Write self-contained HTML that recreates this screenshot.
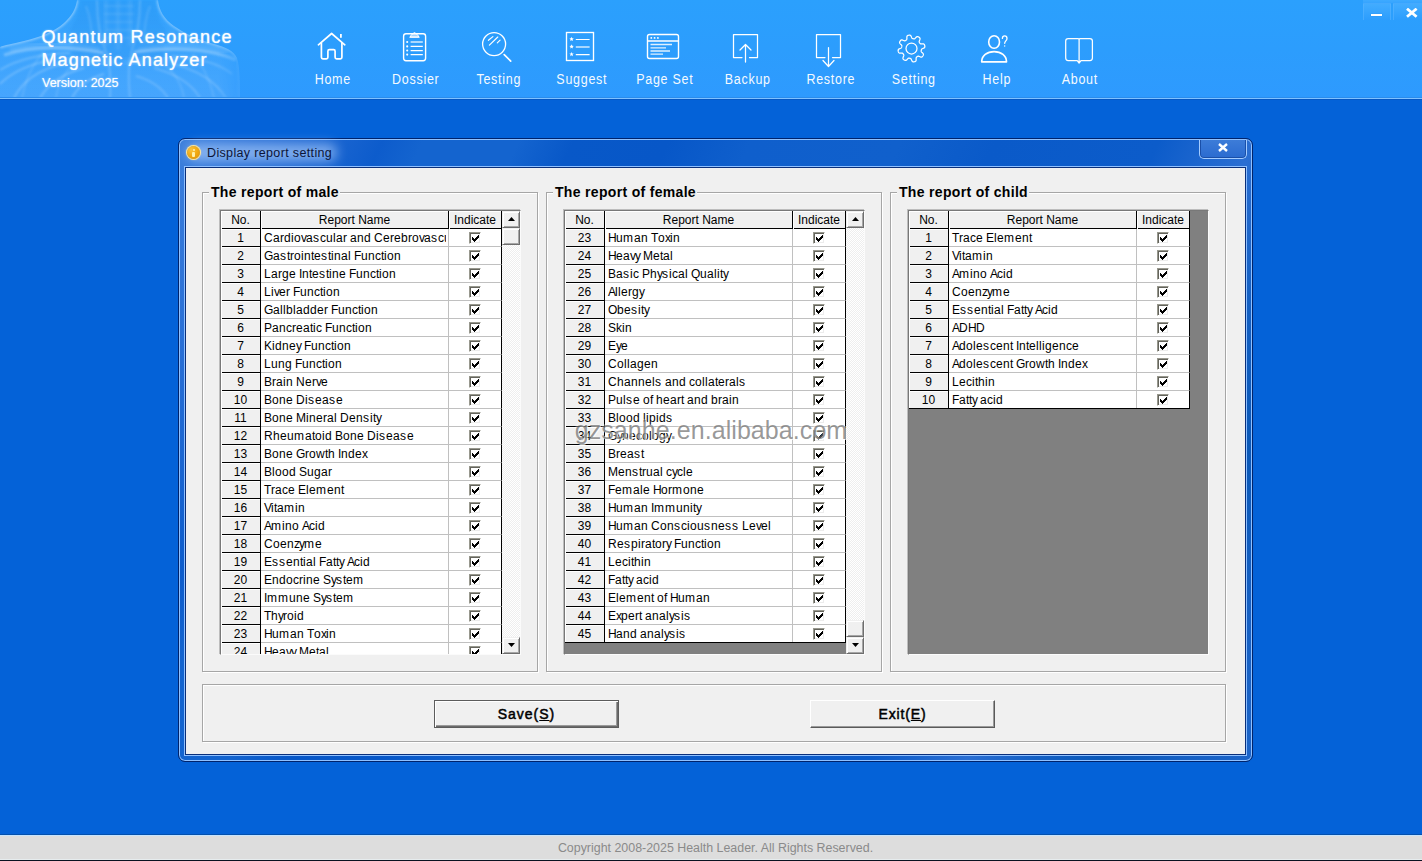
<!DOCTYPE html>
<html><head><meta charset="utf-8"><title>Quantum Resonance Magnetic Analyzer</title>
<style>
*{box-sizing:border-box;margin:0;padding:0}
html,body{width:1422px;height:861px;overflow:hidden}
body{position:relative;background:#0462d8;font-family:"Liberation Sans",sans-serif;font-size:12px;color:#000}
/* ---------- header ---------- */
.hdr{position:absolute;left:0;top:0;width:1422px;height:98px;background:linear-gradient(#2ba0fd,#2c9dfd 50%,#2e9afe);overflow:hidden}
.hdr .torso{position:absolute;left:0;top:0}
.hline1{position:absolute;left:0;top:97px;width:1422px;height:1px;background:#2a8cec}
.hline2{position:absolute;left:0;top:98px;width:1422px;height:1px;background:#7fc1ff}
.hline3{position:absolute;left:0;top:99px;width:1422px;height:1px;background:#0457c4}
.brand{position:absolute;left:42px;color:#fff;white-space:nowrap;text-shadow:0 0 2px rgba(255,255,255,.6);-webkit-text-stroke:.22px #fff}
.b1{top:26px;left:41.5px;font-size:18px;letter-spacing:1.24px;line-height:22px}
.b2{top:49px;left:41.5px;font-size:18px;letter-spacing:1.12px;line-height:22px}
.b3{top:76px;font-size:12.5px;line-height:14px;left:42px;letter-spacing:0;-webkit-text-stroke:.1px #fff}
.nav{position:absolute;top:0;height:98px;width:90px;color:#fff;text-align:center}
.nav svg{position:absolute;left:0;top:0;overflow:visible}
.nav span{position:absolute;left:.8px;width:90px;top:72px;font-size:12.5px;letter-spacing:.72px;line-height:14px;white-space:nowrap;color:#f4faff;transform:translateY(.75px) scaleY(1.1);transform-origin:50% 50%}
.wbtn{position:absolute;top:3px;height:17px;background:linear-gradient(#42acff,#2c9dfd);border:1px solid rgba(90,180,255,.55);border-bottom:none}
/* ---------- footer ---------- */
.footer{position:absolute;left:0;top:834px;width:1422px;height:27px;background:#dddddd;box-shadow:inset 0 -1px 0 #e6ecee;border-top:1px solid #0450ac;border-bottom:1px solid #0a1220;text-align:center}
.footer:before{content:"";position:absolute;left:0;top:0;width:100%;height:1px;background:#c6e4ff}
.footer span{position:absolute;left:0;width:1431px;top:6px;font-size:12.42px;line-height:14px;color:#8a8a8a;white-space:nowrap}
/* ---------- dialog ---------- */
.dlg{position:absolute;left:178px;top:138px;width:1075px;height:624px;border-radius:7px;border:1px solid #00236b;
 background:linear-gradient(115deg,#3c7fdc 0%,#2a70d6 7%,#0d5ccc 15%,#1464cf 18%,#1464cf 25%,#0858c8 29%,#0757c8 36%,#0f5fcc 42%,#1060cc 53%,#0a5ac9 60%,#0c5cca 72%,#2a6ed2 79%,#1460c4 84%,#0a58b8 89%,#1660c4 95%,#1c64c8 100%);
 box-shadow:inset 0 0 0 1px #8fc0ff}
.dlg-glow{position:absolute;left:8px;top:5px;width:150px;height:17px;border-radius:9px;background:rgba(185,215,255,.62);filter:blur(6px)}
.ticon{position:absolute;left:8.4px;top:7.4px;width:13px;height:13px;border-radius:50%;background:radial-gradient(circle at 35% 30%,#f9c440 0%,#f0a810 50%,#dd8e00 100%);box-shadow:0 0 0 1px #ffe596,0 0 1.5px 1px rgba(255,235,170,.5)}
.ticon:before{content:"";position:absolute;left:5.2px;top:2.2px;width:2.6px;height:2.6px;border-radius:50%;background:#fff3b4}
.ticon:after{content:"";position:absolute;left:5px;top:5.6px;width:3px;height:5.2px;background:#fff0aa;border-radius:1px}
.ttext{position:absolute;left:28px;top:6px;font-size:12.5px;line-height:16px;letter-spacing:.35px;color:#0b1538;white-space:nowrap}
.xbtn{position:absolute;left:1020px;top:1px;width:48px;height:19px;border:1px solid #a4ccff;border-top:none;border-radius:0 0 5px 5px;background:linear-gradient(#3d7cd8,#2a6bd0);box-shadow:inset 0 -1px 0 #1a4fa8,inset 1px 0 0 #1a4fa8,inset -1px 0 0 #1a4fa8}
.xbtn svg{position:absolute;left:18px;top:4px}
.client{position:absolute;left:7px;top:29px;width:1059px;height:586px;background:#f0f0f0;box-shadow:0 0 0 1px #0a2f7a,0 0 0 2px #8fc0ff}
/* group boxes */
.gb{position:absolute;top:24px;width:336px;height:480px;border:1px solid #a6a6a6;box-shadow:1px 1px 0 #fff,inset 1px 1px 0 #fff}
.gb .cap{position:absolute;left:6px;top:-9px;padding:0 1px 0 2px;background:#f0f0f0;font-weight:bold;font-size:14px;line-height:17px;letter-spacing:.32px;white-space:nowrap}
.gb2{position:absolute;left:16px;top:516px;width:1024px;height:58px;border:1px solid #a6a6a6;box-shadow:1px 1px 0 #fff,inset 1px 1px 0 #fff}
/* grids */
.grid{position:absolute;top:42px;width:301px;height:445px;background:#808080;border:1px solid #787878;border-right-color:#fbfbfb;border-bottom-color:#fbfbfb;overflow:hidden;box-shadow:-1px -1px 0 #bdbdbd}
.gm{left:34px}.gf{left:378px}.gc{left:722px}
.gi{position:absolute;left:0;top:0;width:281px;background:#fff}
.hr,.r{position:relative;height:18px;white-space:nowrap}
.n,.t,.c{position:absolute;top:0;height:18px;line-height:19px;overflow:hidden}
.n{left:0;width:40px;text-align:center;background:#f0f0f0;border-right:1px solid #000;box-shadow:inset 1px 0 0 #fff,inset 0 -1px 0 #000,inset 0 1px 0 #fff}
.t{left:40px;width:188px;padding-left:3px;border-right:1px solid #c0c0c0;border-bottom:1px solid #c0c0c0;background:#fff}
.c{left:228px;width:53px;border-right:1px solid #000;border-bottom:1px solid #c0c0c0;background:#fff}
.hr .n,.hr .t,.hr .c{background:#f0f0f0;text-align:center;border-right:1px solid #000;border-bottom:none;box-shadow:inset 1px 0 0 #fff,inset 0 -1px 0 #000,inset 0 1px 0 #fff;padding-left:0}
.r .t:after{content:"";position:absolute;right:0;top:0;width:2px;height:17px;background:#fff}
.c i{position:absolute;left:20px;top:3px;width:12px;height:12px;background:#fff;border:1px solid #98988e;border-right-color:#fff;border-bottom-color:#fff;box-shadow:inset 1px 1px 0 #64645c,inset -1px -1px 0 #ececec}
.c i:after{content:"";position:absolute;left:2px;top:2px;width:7px;height:7px;background:
 linear-gradient(#000,#000) 0 2px/1px 3px no-repeat,
 linear-gradient(#000,#000) 1px 3px/1px 3px no-repeat,
 linear-gradient(#000,#000) 2px 4px/1px 3px no-repeat,
 linear-gradient(#000,#000) 3px 3px/1px 3px no-repeat,
 linear-gradient(#000,#000) 4px 2px/1px 3px no-repeat,
 linear-gradient(#000,#000) 5px 1px/1px 3px no-repeat,
 linear-gradient(#000,#000) 6px 0px/1px 3px no-repeat}
.endline{height:1px;background:#000;margin-top:-1px;position:relative;width:281px}
.t i{display:inline-block;font-style:normal;white-space:pre}
.w3{width:3px}.w4{width:4px}.w5{width:5px}.w6{width:6px}.w7{width:7px}.w8{width:8px}.w9{width:9px}.w10{width:10px}.w11{width:11px}
/* scrollbars */
.sb{position:absolute;left:281px;top:0;width:18px;height:443px;background:#f8f8f8;background-image:repeating-conic-gradient(#fff 0 25%,#eeeeee 0 50%);background-size:2px 2px}
.sbb{position:absolute;left:0;width:18px;height:17px;background:#f0f0f0;border:1px solid #f0f0f0;border-right-color:#6e6e6e;border-bottom-color:#6e6e6e;box-shadow:inset 1px 1px 0 #fff,inset -1px -1px 0 #a6a6a6}
.sbb.up{top:0}.sbb.dn{bottom:0}
.sbb svg{position:absolute;left:5px;top:5px}
/* watermark */
.wm{position:absolute;left:388.7px;top:247.6px;font-size:25px;line-height:28px;color:rgba(100,100,100,.66);text-shadow:1px 1px 0 rgba(255,255,255,.7),-1px -1px 0 rgba(255,255,255,.3);white-space:nowrap;letter-spacing:.07px}
/* buttons */
.btn{position:absolute;top:532px;width:185px;height:28px;background:#f0f0f0;border:1px solid #fff;border-right-color:#5a5a5a;border-bottom-color:#5a5a5a;box-shadow:inset -1px -1px 0 #9a9a9a;text-align:center}
.btn.def{border:1px solid #5c5c5c;box-shadow:inset 1px 1px 0 #fff,inset -1px -1px 0 #6a6a6a,inset -2px -2px 0 #9a9a9a}
.btn span{position:absolute;left:0;width:100%;top:4.5px;font-size:14px;line-height:16px;letter-spacing:.97px;-webkit-text-stroke:.5px #000;white-space:nowrap}
.btn u{text-decoration:underline;text-underline-offset:1px}

</style></head>
<body>
<div class="hdr">
 <svg class="torso" width="260" height="98" viewBox="0 0 260 98">
  <defs>
   <filter id="bl1" x="-10%" y="-10%" width="120%" height="120%"><feGaussianBlur stdDeviation="0.8"/></filter>
   <filter id="bl2" x="-10%" y="-10%" width="120%" height="120%"><feGaussianBlur stdDeviation="1.6"/></filter>
   <filter id="bl3" x="-10%" y="-10%" width="120%" height="120%"><feGaussianBlur stdDeviation="3"/></filter>
   <linearGradient id="tf" x1="0" x2="0" y1="0" y2="1"><stop offset="0" stop-color="#fff" stop-opacity=".035"/><stop offset=".45" stop-color="#fff" stop-opacity=".075"/><stop offset="1" stop-color="#fff" stop-opacity=".12"/></linearGradient>
   <linearGradient id="mf" x1="0" x2="1" y1="0" y2="0"><stop offset="0" stop-color="#fff"/><stop offset=".84" stop-color="#fff"/><stop offset=".93" stop-color="#fff" stop-opacity=".35"/><stop offset="1" stop-color="#fff" stop-opacity="0"/></linearGradient>
   <mask id="tm"><rect x="0" y="0" width="260" height="98" fill="url(#mf)"/></mask>
   <clipPath id="tc"><path d="M77 0 C76 8 72 16 64 23 C54 32 40 37 24 41 C12 44 4 45 0 47 L0 98 L240 98 C240 84 240 66 237 58 C234 51 226 47 214 44 C198 40 184 33 174 26 C164 19 159 10 158 0 Z"/></clipPath>
  </defs>
  <g mask="url(#tm)">
  <path d="M77 0 C76 8 72 16 64 23 C54 32 40 37 24 41 C12 44 4 45 0 47 L0 98 L240 98 C240 84 240 66 237 58 C234 51 226 47 214 44 C198 40 184 33 174 26 C164 19 159 10 158 0 Z" fill="url(#tf)"/>
  <path d="M80 0 C80 12 74 22 70 30 L74 60 L162 60 L166 30 C160 22 156 12 155 0Z" fill="#0c6ad6" fill-opacity=".10" filter="url(#bl2)" clip-path="url(#tc)"/>
  <g clip-path="url(#tc)" fill="none" stroke="#fff">
   <path d="M77 0 C76 8 72 16 64 23 C54 32 40 37 24 41 C12 44 4 45 0 47" stroke-opacity=".38" stroke-width="3" filter="url(#bl1)"/>
   <path d="M158 0 C159 10 164 19 174 26 C184 33 198 40 214 44 C226 47 234 51 237 58" stroke-opacity=".32" stroke-width="3" filter="url(#bl1)"/>
   <path d="M237 58 C240 66 240 84 240 98" stroke-opacity=".14" stroke-width="3" filter="url(#bl2)"/>
   <path d="M97 0 C97 20 100 38 106 52 C110 64 111 80 110 98 M140 0 C140 18 137 36 132 50 C128 64 128 80 130 98" stroke-opacity=".16" stroke-width="2.2" filter="url(#bl1)"/>
   <path d="M106 0 V46 M118 0 V50 M130 0 V46" stroke-opacity=".07" stroke-width="4" filter="url(#bl2)"/>
   <path d="M104 6 H134 M104 14 H134 M105 22 H133 M106 30 H132 M107 38 H131" stroke-opacity=".07" stroke-width="2.5" filter="url(#bl1)"/>
   <path d="M4 55 C28 47 60 45 104 53 M236 60 C214 50 180 46 134 52" stroke-opacity=".27" stroke-width="3.2" filter="url(#bl1)"/>
   <path d="M10 50 C40 42 70 44 100 50 M228 52 C200 44 170 44 138 50" stroke-opacity=".10" stroke-width="5" filter="url(#bl2)"/>
   <path d="M0 70 C16 60 40 54 70 53 M0 84 C12 72 30 64 52 60 M14 98 C22 82 38 70 62 64 M40 98 C48 84 62 74 84 68 M72 98 C78 86 90 78 104 74" stroke-opacity=".20" stroke-width="2" filter="url(#bl1)"/>
   <path d="M232 74 C220 64 200 58 172 56 M226 98 C216 82 198 70 172 64 M200 98 C192 84 176 74 154 68 M168 98 C162 88 150 80 136 76" stroke-opacity=".17" stroke-width="2" filter="url(#bl1)"/>
   <path d="M22 98 C26 78 32 64 44 52 M56 98 C58 84 64 72 76 62 M214 98 C210 80 204 66 192 54 M184 98 C182 86 176 74 164 64" stroke-opacity=".11" stroke-width="2" filter="url(#bl1)"/>
   <path d="M86 6 C90 16 92 30 92 44 M150 6 C146 16 144 30 144 44" stroke-opacity=".12" stroke-width="2" filter="url(#bl1)"/>
   <path d="M60 60 C80 56 100 58 112 64 M178 60 C158 56 138 58 126 64" stroke-opacity=".10" stroke-width="6" filter="url(#bl3)"/>
  </g>
  </g>
 </svg>
 <div class="brand b1">Quantum Resonance</div>
 <div class="brand b2">Magnetic Analyzer</div>
 <div class="brand b3">Version: 2025</div>

 <!-- Home -->
 <div class="nav" style="left:287px"><svg width="90" height="70" fill="none" stroke="#fff" stroke-width="1.7" stroke-linejoin="round" stroke-linecap="round">
  <path d="M31.4 44.8 L44.6 33.5 L57.8 44.8"/><path d="M34.4 43 V57.3 Q34.4 58.8 35.9 58.8 H39.4 Q40.9 58.8 40.9 57.3 V51.2 Q40.9 49.7 42.4 49.7 H46.6 Q48.1 49.7 48.1 51.2 V57.3 Q48.1 58.8 49.6 58.8 H53.4 Q54.9 58.8 54.9 57.3 V43"/><path d="M53.9 34 V37.7" stroke-linecap="butt" stroke-width="1.8"/></svg><span>Home</span></div>
 <!-- Dossier -->
 <div class="nav" style="left:370px"><svg width="90" height="70" fill="none" stroke="#fff" stroke-width="1.4" stroke-linejoin="round" stroke-linecap="round">
  <rect x="33.6" y="33.8" width="22" height="26.9" rx="2.4"/>
  <path d="M40.4 36.6 C40.9 34.8 41.8 34.3 43 33.9 C43.4 32.2 45.6 32.2 46 33.9 C47.2 34.3 48.1 34.8 48.6 36.6 Z" fill="#fff" fill-opacity=".55" stroke-width="1"/>
  <path d="M40 37.2 H49" stroke-width="1.3"/>
  <path d="M40.6 42 H52.8" stroke-width="2" stroke-opacity=".6" stroke-linecap="butt"/>
  <path d="M40.6 46.4 H52.8 M40.6 50.5 H52.8 M40.6 54.6 H52.8" stroke-width="1.25" stroke-linecap="butt"/>
  <path d="M37.2 42h.01M37.2 46.4h.01M37.2 50.5h.01M37.2 54.6h.01" stroke-width="2.1"/></svg><span>Dossier</span></div>
 <!-- Testing -->
 <div class="nav" style="left:453px"><svg width="90" height="70" fill="none" stroke="#fff" stroke-width="1.3" stroke-linecap="round">
  <circle cx="41.1" cy="44.1" r="11.5"/><path d="M51.2 54.6 L57.7 61.1" stroke-width="1.7"/><path d="M35.4 40.3 L39.9 36.6 M36.4 45.2 L44.8 37 M44.3 42.9 L47.1 40.1" stroke-width="1.15"/></svg><span>Testing</span></div>
 <!-- Suggest -->
 <div class="nav" style="left:536px"><svg width="90" height="70" fill="none" stroke="#fff" stroke-width="1.35" stroke-linecap="round">
  <rect x="30.5" y="32.5" width="27" height="28"/><path d="M39.8 39.5 H53.6 M39.8 54.6 H53.6" stroke-width="1.2" stroke-linecap="butt"/><path d="M39.8 47 H53.6" stroke-width="1.8" stroke-opacity=".65" stroke-linecap="butt"/>
  <path d="M35.60 36.85 L36.22 38.35 L37.83 38.47 L36.60 39.52 L36.98 41.10 L35.60 40.25 L34.22 41.10 L34.60 39.52 L33.37 38.47 L34.98 38.35Z M35.60 44.35 L36.22 45.85 L37.83 45.97 L36.60 47.02 L36.98 48.60 L35.60 47.75 L34.22 48.60 L34.60 47.02 L33.37 45.97 L34.98 45.85Z M35.60 51.95 L36.22 53.45 L37.83 53.57 L36.60 54.62 L36.98 56.20 L35.60 55.35 L34.22 56.20 L34.60 54.62 L33.37 53.57 L34.98 53.45Z" fill="#fff" stroke="none"/></svg><span>Suggest</span></div>
 <!-- Page Set -->
 <div class="nav" style="left:619px"><svg width="90" height="70" fill="none" stroke="#fff" stroke-width="1.4" stroke-linecap="round">
  <rect x="28.5" y="34.5" width="31" height="24" rx="2"/><path d="M29 41 H59"/>
  <path d="M32.3 37.9h.01M35.6 37.9h.01M38.9 37.9h.01" stroke-width="1.9"/>
  <path d="M31.5 44.5 H53 M31.5 47.8 H47 M31.5 51 H51 M31.5 54.2 H44" stroke-width="1.3" stroke-linecap="butt" stroke-opacity=".85"/></svg><span>Page Set</span></div>
 <!-- Backup -->
 <div class="nav" style="left:702px"><svg width="90" height="70" fill="none" stroke="#fff" stroke-width="1.25" stroke-linecap="round" stroke-linejoin="round">
  <path d="M40 57.5 H31.5 V34.5 H55.5 V57.5 H47.5"/><path d="M43.5 62 V45 M38 50 L43.5 44.5 L49 50"/></svg><span>Backup</span></div>
 <!-- Restore -->
 <div class="nav" style="left:785px"><svg width="90" height="70" fill="none" stroke="#fff" stroke-width="1.25" stroke-linecap="round" stroke-linejoin="round">
  <path d="M40 57.5 H31.5 V34.5 H55.5 V57.5 H47.5"/><path d="M43.5 47.5 V66 M38 60.5 L43.5 66.5 L49 60.5"/></svg><span>Restore</span></div>
 <!-- Setting -->
 <div class="nav" style="left:868px"><svg width="90" height="70" fill="none" stroke="#fff" stroke-width="1.25" stroke-linejoin="round">
  <circle cx="43.5" cy="48.5" r="5.5"/>
  <path d="M54.87 48.50 L54.22 48.78 L53.81 49.04 L53.59 49.29 L53.47 49.55 L53.39 49.80 L53.33 50.06 L53.28 50.31 L53.24 50.57 L53.20 50.83 L53.18 51.09 L53.21 51.38 L53.32 51.69 L53.61 52.08 L54.11 52.57 L54.71 53.14 L55.17 53.70 L55.39 54.17 L55.42 54.57 L55.34 54.93 L55.21 55.26 L55.05 55.58 L54.86 55.88 L54.66 56.17 L54.44 56.45 L54.19 56.70 L53.90 56.92 L53.52 57.05 L52.99 57.05 L52.30 56.85 L51.54 56.54 L50.88 56.28 L50.41 56.18 L50.07 56.20 L49.81 56.29 L49.57 56.42 L49.35 56.55 L49.14 56.70 L48.92 56.85 L48.71 57.01 L48.51 57.18 L48.33 57.40 L48.19 57.70 L48.12 58.18 L48.12 58.88 L48.14 59.71 L48.08 60.43 L47.90 60.92 L47.63 61.22 L47.33 61.42 L47.00 61.56 L46.66 61.67 L46.32 61.75 L45.97 61.82 L45.62 61.86 L45.26 61.86 L44.90 61.80 L44.53 61.63 L44.17 61.26 L43.82 60.63 L43.50 59.87 L43.22 59.22 L42.96 58.81 L42.71 58.59 L42.45 58.47 L42.20 58.39 L41.94 58.33 L41.69 58.28 L41.43 58.24 L41.17 58.20 L40.91 58.18 L40.62 58.21 L40.31 58.32 L39.92 58.61 L39.43 59.11 L38.86 59.71 L38.30 60.17 L37.83 60.39 L37.43 60.42 L37.07 60.34 L36.74 60.21 L36.42 60.05 L36.12 59.86 L35.83 59.66 L35.55 59.44 L35.30 59.19 L35.08 58.90 L34.95 58.52 L34.95 57.99 L35.15 57.30 L35.46 56.54 L35.72 55.88 L35.82 55.41 L35.80 55.07 L35.71 54.81 L35.58 54.57 L35.45 54.35 L35.30 54.14 L35.15 53.92 L34.99 53.71 L34.82 53.51 L34.60 53.33 L34.30 53.19 L33.82 53.12 L33.12 53.12 L32.29 53.14 L31.57 53.08 L31.08 52.90 L30.78 52.63 L30.58 52.33 L30.44 52.00 L30.33 51.66 L30.25 51.32 L30.18 50.97 L30.14 50.62 L30.14 50.26 L30.20 49.90 L30.37 49.53 L30.74 49.17 L31.37 48.82 L32.13 48.50 L32.78 48.22 L33.19 47.96 L33.41 47.71 L33.53 47.45 L33.61 47.20 L33.67 46.94 L33.72 46.69 L33.76 46.43 L33.80 46.17 L33.82 45.91 L33.79 45.62 L33.68 45.31 L33.39 44.92 L32.89 44.43 L32.29 43.86 L31.83 43.30 L31.61 42.83 L31.58 42.43 L31.66 42.07 L31.79 41.74 L31.95 41.42 L32.14 41.12 L32.34 40.83 L32.56 40.55 L32.81 40.30 L33.10 40.08 L33.48 39.95 L34.01 39.95 L34.70 40.15 L35.46 40.46 L36.12 40.72 L36.59 40.82 L36.93 40.80 L37.19 40.71 L37.43 40.58 L37.65 40.45 L37.86 40.30 L38.08 40.15 L38.29 39.99 L38.49 39.82 L38.67 39.60 L38.81 39.30 L38.88 38.82 L38.88 38.12 L38.86 37.29 L38.92 36.57 L39.10 36.08 L39.37 35.78 L39.67 35.58 L40.00 35.44 L40.34 35.33 L40.68 35.25 L41.03 35.18 L41.38 35.14 L41.74 35.14 L42.10 35.20 L42.47 35.37 L42.83 35.74 L43.18 36.37 L43.50 37.13 L43.78 37.78 L44.04 38.19 L44.29 38.41 L44.55 38.53 L44.80 38.61 L45.06 38.67 L45.31 38.72 L45.57 38.76 L45.83 38.80 L46.09 38.82 L46.38 38.79 L46.69 38.68 L47.08 38.39 L47.57 37.89 L48.14 37.29 L48.70 36.83 L49.17 36.61 L49.57 36.58 L49.93 36.66 L50.26 36.79 L50.58 36.95 L50.88 37.14 L51.17 37.34 L51.45 37.56 L51.70 37.81 L51.92 38.10 L52.05 38.48 L52.05 39.01 L51.85 39.70 L51.54 40.46 L51.28 41.12 L51.18 41.59 L51.20 41.93 L51.29 42.19 L51.42 42.43 L51.55 42.65 L51.70 42.86 L51.85 43.08 L52.01 43.29 L52.18 43.49 L52.40 43.67 L52.70 43.81 L53.18 43.88 L53.88 43.88 L54.71 43.86 L55.43 43.92 L55.92 44.10 L56.22 44.37 L56.42 44.67 L56.56 45.00 L56.67 45.34 L56.75 45.68 L56.82 46.03 L56.86 46.38 L56.86 46.74 L56.80 47.10 L56.63 47.47 L56.26 47.83 L55.63 48.18Z"/></svg><span>Setting</span></div>
 <!-- Help -->
 <div class="nav" style="left:951px"><svg width="90" height="70" fill="none" stroke="#fff" stroke-width="1.6" stroke-linecap="round" stroke-linejoin="round">
  <ellipse cx="43.1" cy="42" rx="5.4" ry="6.3"/><path d="M30.7 61.8 C30.7 55.6 36 51.6 43.1 51.6 C50.2 51.6 55.5 55.6 55.5 61.8 Z" stroke-width="1.7"/>
  <path d="M51.4 38.4 C51.4 35.1 56 35.1 56 38.4 C56 40.8 53.7 41 53.7 43.3 M53.7 45.8 v.2" stroke-width="1.3"/></svg><span>Help</span></div>
 <!-- About -->
 <div class="nav" style="left:1034px"><svg width="90" height="70" fill="none" stroke="#fff" stroke-width="1.25" stroke-linecap="round" stroke-linejoin="round">
  <path d="M45.1 39.2 Q44.8 38.5 43.8 38.5 H34.2 Q31.7 38.5 31.7 41 V58.1 Q31.7 60.6 34.2 60.6 H43.2 L45.1 63 L47 60.6 H55.9 Q58.4 60.6 58.4 58.1 V41 Q58.4 38.5 55.9 38.5 H46.4 Q45.4 38.5 45.1 39.2 V61.5"/></svg><span>About</span></div>

 <div style="position:absolute;left:1363px;top:0;width:59px;height:3px;background:linear-gradient(#3eaaff,#36a4fe)"></div>
 <div class="wbtn" style="left:1363px;width:28px"><div style="position:absolute;left:7px;top:9.8px;width:11px;height:2.7px;background:#fff;box-shadow:0 0 1px rgba(20,90,200,.5)"></div></div>
 <div class="wbtn" style="left:1393px;width:30px"><svg style="position:absolute;left:12px;top:4px" width="12" height="10" viewBox="0 0 12 10"><path d="M1 .7 L10.6 8.8 M10.6 .7 L1 8.8" stroke="#fff" stroke-width="2.8" fill="none"/></svg></div>
</div>
<div class="hline1"></div><div class="hline2"></div><div class="hline3"></div>

<div class="dlg">
 <div class="dlg-glow"></div>
 <div class="ticon"></div>
 <div class="ttext">Display report setting</div>
 <div class="xbtn"><svg style="top:3.4px" width="10" height="9" viewBox="0 0 10 9"><path d="M1 1 L9 8 M9 1 L1 8" stroke="#fff" stroke-width="2.4" stroke-linecap="butt" fill="none"/></svg></div>
 <div class="client">
  <div class="gb" style="left:16px"><span class="cap">The report of male</span></div>
  <div class="gb" style="left:360px"><span class="cap">The report of female</span></div>
  <div class="gb" style="left:704px"><span class="cap">The report of child</span></div>
  <div class="grid gm"><div class="gi"><div class="hr"><div class="n">No.</div><div class="t">Report Name</div><div class="c">Indicate</div></div>
<div class="r"><div class="n">1</div><div class="t"><i class="w9">C</i><i class="w7">a</i><i class="w4">r</i><i class="w7">d</i><i class="w3">i</i><i class="w7">o</i><i class="w5">v</i><i class="w7">a</i><i class="w7">s</i><i class="w6">c</i><i class="w7">u</i><i class="w3">l</i><i class="w7">a</i><i class="w4">r</i><i class="w3"> </i><i class="w7">a</i><i class="w7">n</i><i class="w7">d</i><i class="w3"> </i><i class="w9">C</i><i class="w7">e</i><i class="w4">r</i><i class="w7">e</i><i class="w7">b</i><i class="w4">r</i><i class="w7">o</i><i class="w5">v</i><i class="w7">a</i><i class="w7">s</i><i class="w6">c</i><i class="w7">u</i><i class="w3">l</i><i class="w7">a</i><i class="w4">r</i></div><div class="c"><i></i></div></div>
<div class="r"><div class="n">2</div><div class="t"><i class="w9">G</i><i class="w7">a</i><i class="w7">s</i><i class="w3">t</i><i class="w4">r</i><i class="w7">o</i><i class="w3">i</i><i class="w7">n</i><i class="w3">t</i><i class="w7">e</i><i class="w7">s</i><i class="w3">t</i><i class="w3">i</i><i class="w7">n</i><i class="w7">a</i><i class="w3">l</i><i class="w3"> </i><i class="w7">F</i><i class="w7">u</i><i class="w7">n</i><i class="w6">c</i><i class="w3">t</i><i class="w3">i</i><i class="w7">o</i><i class="w7">n</i></div><div class="c"><i></i></div></div>
<div class="r"><div class="n">3</div><div class="t"><i class="w7">L</i><i class="w7">a</i><i class="w4">r</i><i class="w7">g</i><i class="w7">e</i><i class="w3"> </i><i class="w3">I</i><i class="w7">n</i><i class="w3">t</i><i class="w7">e</i><i class="w7">s</i><i class="w3">t</i><i class="w3">i</i><i class="w7">n</i><i class="w7">e</i><i class="w3"> </i><i class="w7">F</i><i class="w7">u</i><i class="w7">n</i><i class="w6">c</i><i class="w3">t</i><i class="w3">i</i><i class="w7">o</i><i class="w7">n</i></div><div class="c"><i></i></div></div>
<div class="r"><div class="n">4</div><div class="t"><i class="w7">L</i><i class="w3">i</i><i class="w5">v</i><i class="w7">e</i><i class="w4">r</i><i class="w3"> </i><i class="w7">F</i><i class="w7">u</i><i class="w7">n</i><i class="w6">c</i><i class="w3">t</i><i class="w3">i</i><i class="w7">o</i><i class="w7">n</i></div><div class="c"><i></i></div></div>
<div class="r"><div class="n">5</div><div class="t"><i class="w9">G</i><i class="w7">a</i><i class="w3">l</i><i class="w3">l</i><i class="w7">b</i><i class="w3">l</i><i class="w7">a</i><i class="w7">d</i><i class="w7">d</i><i class="w7">e</i><i class="w4">r</i><i class="w3"> </i><i class="w7">F</i><i class="w7">u</i><i class="w7">n</i><i class="w6">c</i><i class="w3">t</i><i class="w3">i</i><i class="w7">o</i><i class="w7">n</i></div><div class="c"><i></i></div></div>
<div class="r"><div class="n">6</div><div class="t"><i class="w8">P</i><i class="w7">a</i><i class="w7">n</i><i class="w6">c</i><i class="w4">r</i><i class="w7">e</i><i class="w7">a</i><i class="w3">t</i><i class="w3">i</i><i class="w6">c</i><i class="w3"> </i><i class="w7">F</i><i class="w7">u</i><i class="w7">n</i><i class="w6">c</i><i class="w3">t</i><i class="w3">i</i><i class="w7">o</i><i class="w7">n</i></div><div class="c"><i></i></div></div>
<div class="r"><div class="n">7</div><div class="t"><i class="w8">K</i><i class="w3">i</i><i class="w7">d</i><i class="w7">n</i><i class="w7">e</i><i class="w5">y</i><i class="w3"> </i><i class="w7">F</i><i class="w7">u</i><i class="w7">n</i><i class="w6">c</i><i class="w3">t</i><i class="w3">i</i><i class="w7">o</i><i class="w7">n</i></div><div class="c"><i></i></div></div>
<div class="r"><div class="n">8</div><div class="t"><i class="w7">L</i><i class="w7">u</i><i class="w7">n</i><i class="w7">g</i><i class="w3"> </i><i class="w7">F</i><i class="w7">u</i><i class="w7">n</i><i class="w6">c</i><i class="w3">t</i><i class="w3">i</i><i class="w7">o</i><i class="w7">n</i></div><div class="c"><i></i></div></div>
<div class="r"><div class="n">9</div><div class="t"><i class="w8">B</i><i class="w4">r</i><i class="w7">a</i><i class="w3">i</i><i class="w7">n</i><i class="w3"> </i><i class="w9">N</i><i class="w7">e</i><i class="w4">r</i><i class="w5">v</i><i class="w7">e</i></div><div class="c"><i></i></div></div>
<div class="r"><div class="n">10</div><div class="t"><i class="w8">B</i><i class="w7">o</i><i class="w7">n</i><i class="w7">e</i><i class="w3"> </i><i class="w9">D</i><i class="w3">i</i><i class="w7">s</i><i class="w7">e</i><i class="w7">a</i><i class="w7">s</i><i class="w7">e</i></div><div class="c"><i></i></div></div>
<div class="r"><div class="n">11</div><div class="t"><i class="w8">B</i><i class="w7">o</i><i class="w7">n</i><i class="w7">e</i><i class="w3"> </i><i class="w10">M</i><i class="w3">i</i><i class="w7">n</i><i class="w7">e</i><i class="w4">r</i><i class="w7">a</i><i class="w3">l</i><i class="w3"> </i><i class="w9">D</i><i class="w7">e</i><i class="w7">n</i><i class="w7">s</i><i class="w3">i</i><i class="w3">t</i><i class="w5">y</i></div><div class="c"><i></i></div></div>
<div class="r"><div class="n">12</div><div class="t"><i class="w9">R</i><i class="w7">h</i><i class="w7">e</i><i class="w7">u</i><i class="w11">m</i><i class="w7">a</i><i class="w3">t</i><i class="w7">o</i><i class="w3">i</i><i class="w7">d</i><i class="w3"> </i><i class="w8">B</i><i class="w7">o</i><i class="w7">n</i><i class="w7">e</i><i class="w3"> </i><i class="w9">D</i><i class="w3">i</i><i class="w7">s</i><i class="w7">e</i><i class="w7">a</i><i class="w7">s</i><i class="w7">e</i></div><div class="c"><i></i></div></div>
<div class="r"><div class="n">13</div><div class="t"><i class="w8">B</i><i class="w7">o</i><i class="w7">n</i><i class="w7">e</i><i class="w3"> </i><i class="w9">G</i><i class="w4">r</i><i class="w7">o</i><i class="w9">w</i><i class="w3">t</i><i class="w7">h</i><i class="w3"> </i><i class="w3">I</i><i class="w7">n</i><i class="w7">d</i><i class="w7">e</i><i class="w5">x</i></div><div class="c"><i></i></div></div>
<div class="r"><div class="n">14</div><div class="t"><i class="w8">B</i><i class="w3">l</i><i class="w7">o</i><i class="w7">o</i><i class="w7">d</i><i class="w3"> </i><i class="w8">S</i><i class="w7">u</i><i class="w7">g</i><i class="w7">a</i><i class="w4">r</i></div><div class="c"><i></i></div></div>
<div class="r"><div class="n">15</div><div class="t"><i class="w7">T</i><i class="w4">r</i><i class="w7">a</i><i class="w6">c</i><i class="w7">e</i><i class="w3"> </i><i class="w8">E</i><i class="w3">l</i><i class="w7">e</i><i class="w11">m</i><i class="w7">e</i><i class="w7">n</i><i class="w3">t</i></div><div class="c"><i></i></div></div>
<div class="r"><div class="n">16</div><div class="t"><i class="w7">V</i><i class="w3">i</i><i class="w3">t</i><i class="w7">a</i><i class="w11">m</i><i class="w3">i</i><i class="w7">n</i></div><div class="c"><i></i></div></div>
<div class="r"><div class="n">17</div><div class="t"><i class="w7">A</i><i class="w11">m</i><i class="w3">i</i><i class="w7">n</i><i class="w7">o</i><i class="w3"> </i><i class="w7">A</i><i class="w6">c</i><i class="w3">i</i><i class="w7">d</i></div><div class="c"><i></i></div></div>
<div class="r"><div class="n">18</div><div class="t"><i class="w9">C</i><i class="w7">o</i><i class="w7">e</i><i class="w7">n</i><i class="w5">z</i><i class="w5">y</i><i class="w11">m</i><i class="w7">e</i></div><div class="c"><i></i></div></div>
<div class="r"><div class="n">19</div><div class="t"><i class="w8">E</i><i class="w7">s</i><i class="w7">s</i><i class="w7">e</i><i class="w7">n</i><i class="w3">t</i><i class="w3">i</i><i class="w7">a</i><i class="w3">l</i><i class="w3"> </i><i class="w7">F</i><i class="w7">a</i><i class="w3">t</i><i class="w3">t</i><i class="w5">y</i><i class="w3"> </i><i class="w7">A</i><i class="w6">c</i><i class="w3">i</i><i class="w7">d</i></div><div class="c"><i></i></div></div>
<div class="r"><div class="n">20</div><div class="t"><i class="w8">E</i><i class="w7">n</i><i class="w7">d</i><i class="w7">o</i><i class="w6">c</i><i class="w4">r</i><i class="w3">i</i><i class="w7">n</i><i class="w7">e</i><i class="w3"> </i><i class="w8">S</i><i class="w5">y</i><i class="w7">s</i><i class="w3">t</i><i class="w7">e</i><i class="w11">m</i></div><div class="c"><i></i></div></div>
<div class="r"><div class="n">21</div><div class="t"><i class="w3">I</i><i class="w11">m</i><i class="w11">m</i><i class="w7">u</i><i class="w7">n</i><i class="w7">e</i><i class="w3"> </i><i class="w8">S</i><i class="w5">y</i><i class="w7">s</i><i class="w3">t</i><i class="w7">e</i><i class="w11">m</i></div><div class="c"><i></i></div></div>
<div class="r"><div class="n">22</div><div class="t"><i class="w7">T</i><i class="w7">h</i><i class="w5">y</i><i class="w4">r</i><i class="w7">o</i><i class="w3">i</i><i class="w7">d</i></div><div class="c"><i></i></div></div>
<div class="r"><div class="n">23</div><div class="t"><i class="w8">H</i><i class="w7">u</i><i class="w11">m</i><i class="w7">a</i><i class="w7">n</i><i class="w3"> </i><i class="w7">T</i><i class="w7">o</i><i class="w5">x</i><i class="w3">i</i><i class="w7">n</i></div><div class="c"><i></i></div></div>
<div class="r"><div class="n">24</div><div class="t"><i class="w8">H</i><i class="w7">e</i><i class="w7">a</i><i class="w5">v</i><i class="w5">y</i><i class="w3"> </i><i class="w10">M</i><i class="w7">e</i><i class="w3">t</i><i class="w7">a</i><i class="w3">l</i></div><div class="c"><i></i></div></div><div class="endline"></div></div><div class="sb"><div class="sbb up"><svg width="7" height="4" viewBox="0 0 7 4"><path d="M0 4 L3.5 0 L7 4Z" fill="#000"/></svg></div><div class="sbb th" style="top:17px"></div><div class="sbb dn"><svg width="7" height="4" viewBox="0 0 7 4"><path d="M0 0 L3.5 4 L7 0Z" fill="#000"/></svg></div></div></div>
  <div class="grid gf"><div class="gi"><div class="hr"><div class="n">No.</div><div class="t">Report Name</div><div class="c">Indicate</div></div>
<div class="r"><div class="n">23</div><div class="t"><i class="w8">H</i><i class="w7">u</i><i class="w11">m</i><i class="w7">a</i><i class="w7">n</i><i class="w3"> </i><i class="w7">T</i><i class="w7">o</i><i class="w5">x</i><i class="w3">i</i><i class="w7">n</i></div><div class="c"><i></i></div></div>
<div class="r"><div class="n">24</div><div class="t"><i class="w8">H</i><i class="w7">e</i><i class="w7">a</i><i class="w5">v</i><i class="w5">y</i><i class="w3"> </i><i class="w10">M</i><i class="w7">e</i><i class="w3">t</i><i class="w7">a</i><i class="w3">l</i></div><div class="c"><i></i></div></div>
<div class="r"><div class="n">25</div><div class="t"><i class="w8">B</i><i class="w7">a</i><i class="w7">s</i><i class="w3">i</i><i class="w6">c</i><i class="w3"> </i><i class="w8">P</i><i class="w7">h</i><i class="w5">y</i><i class="w7">s</i><i class="w3">i</i><i class="w6">c</i><i class="w7">a</i><i class="w3">l</i><i class="w3"> </i><i class="w9">Q</i><i class="w7">u</i><i class="w7">a</i><i class="w3">l</i><i class="w3">i</i><i class="w3">t</i><i class="w5">y</i></div><div class="c"><i></i></div></div>
<div class="r"><div class="n">26</div><div class="t"><i class="w7">A</i><i class="w3">l</i><i class="w3">l</i><i class="w7">e</i><i class="w4">r</i><i class="w7">g</i><i class="w5">y</i></div><div class="c"><i></i></div></div>
<div class="r"><div class="n">27</div><div class="t"><i class="w9">O</i><i class="w7">b</i><i class="w7">e</i><i class="w7">s</i><i class="w3">i</i><i class="w3">t</i><i class="w5">y</i></div><div class="c"><i></i></div></div>
<div class="r"><div class="n">28</div><div class="t"><i class="w8">S</i><i class="w6">k</i><i class="w3">i</i><i class="w7">n</i></div><div class="c"><i></i></div></div>
<div class="r"><div class="n">29</div><div class="t"><i class="w8">E</i><i class="w5">y</i><i class="w7">e</i></div><div class="c"><i></i></div></div>
<div class="r"><div class="n">30</div><div class="t"><i class="w9">C</i><i class="w7">o</i><i class="w3">l</i><i class="w3">l</i><i class="w7">a</i><i class="w7">g</i><i class="w7">e</i><i class="w7">n</i></div><div class="c"><i></i></div></div>
<div class="r"><div class="n">31</div><div class="t"><i class="w9">C</i><i class="w7">h</i><i class="w7">a</i><i class="w7">n</i><i class="w7">n</i><i class="w7">e</i><i class="w3">l</i><i class="w7">s</i><i class="w3"> </i><i class="w7">a</i><i class="w7">n</i><i class="w7">d</i><i class="w3"> </i><i class="w6">c</i><i class="w7">o</i><i class="w3">l</i><i class="w3">l</i><i class="w7">a</i><i class="w3">t</i><i class="w7">e</i><i class="w4">r</i><i class="w7">a</i><i class="w3">l</i><i class="w7">s</i></div><div class="c"><i></i></div></div>
<div class="r"><div class="n">32</div><div class="t"><i class="w8">P</i><i class="w7">u</i><i class="w3">l</i><i class="w7">s</i><i class="w7">e</i><i class="w3"> </i><i class="w7">o</i><i class="w3">f</i><i class="w3"> </i><i class="w7">h</i><i class="w7">e</i><i class="w7">a</i><i class="w4">r</i><i class="w3">t</i><i class="w3"> </i><i class="w7">a</i><i class="w7">n</i><i class="w7">d</i><i class="w3"> </i><i class="w7">b</i><i class="w4">r</i><i class="w7">a</i><i class="w3">i</i><i class="w7">n</i></div><div class="c"><i></i></div></div>
<div class="r"><div class="n">33</div><div class="t"><i class="w8">B</i><i class="w3">l</i><i class="w7">o</i><i class="w7">o</i><i class="w7">d</i><i class="w3"> </i><i class="w3">l</i><i class="w3">i</i><i class="w7">p</i><i class="w3">i</i><i class="w7">d</i><i class="w7">s</i></div><div class="c"><i></i></div></div>
<div class="r"><div class="n">34</div><div class="t"><i class="w9">G</i><i class="w5">y</i><i class="w7">n</i><i class="w7">e</i><i class="w6">c</i><i class="w7">o</i><i class="w3">l</i><i class="w7">o</i><i class="w7">g</i><i class="w5">y</i></div><div class="c"><i></i></div></div>
<div class="r"><div class="n">35</div><div class="t"><i class="w8">B</i><i class="w4">r</i><i class="w7">e</i><i class="w7">a</i><i class="w7">s</i><i class="w3">t</i></div><div class="c"><i></i></div></div>
<div class="r"><div class="n">36</div><div class="t"><i class="w10">M</i><i class="w7">e</i><i class="w7">n</i><i class="w7">s</i><i class="w3">t</i><i class="w4">r</i><i class="w7">u</i><i class="w7">a</i><i class="w3">l</i><i class="w3"> </i><i class="w6">c</i><i class="w5">y</i><i class="w6">c</i><i class="w3">l</i><i class="w7">e</i></div><div class="c"><i></i></div></div>
<div class="r"><div class="n">37</div><div class="t"><i class="w7">F</i><i class="w7">e</i><i class="w11">m</i><i class="w7">a</i><i class="w3">l</i><i class="w7">e</i><i class="w3"> </i><i class="w8">H</i><i class="w7">o</i><i class="w4">r</i><i class="w11">m</i><i class="w7">o</i><i class="w7">n</i><i class="w7">e</i></div><div class="c"><i></i></div></div>
<div class="r"><div class="n">38</div><div class="t"><i class="w8">H</i><i class="w7">u</i><i class="w11">m</i><i class="w7">a</i><i class="w7">n</i><i class="w3"> </i><i class="w3">I</i><i class="w11">m</i><i class="w11">m</i><i class="w7">u</i><i class="w7">n</i><i class="w3">i</i><i class="w3">t</i><i class="w5">y</i></div><div class="c"><i></i></div></div>
<div class="r"><div class="n">39</div><div class="t"><i class="w8">H</i><i class="w7">u</i><i class="w11">m</i><i class="w7">a</i><i class="w7">n</i><i class="w3"> </i><i class="w9">C</i><i class="w7">o</i><i class="w7">n</i><i class="w7">s</i><i class="w6">c</i><i class="w3">i</i><i class="w7">o</i><i class="w7">u</i><i class="w7">s</i><i class="w7">n</i><i class="w7">e</i><i class="w7">s</i><i class="w7">s</i><i class="w3"> </i><i class="w7">L</i><i class="w7">e</i><i class="w5">v</i><i class="w7">e</i><i class="w3">l</i></div><div class="c"><i></i></div></div>
<div class="r"><div class="n">40</div><div class="t"><i class="w9">R</i><i class="w7">e</i><i class="w7">s</i><i class="w7">p</i><i class="w3">i</i><i class="w4">r</i><i class="w7">a</i><i class="w3">t</i><i class="w7">o</i><i class="w4">r</i><i class="w5">y</i><i class="w3"> </i><i class="w7">F</i><i class="w7">u</i><i class="w7">n</i><i class="w6">c</i><i class="w3">t</i><i class="w3">i</i><i class="w7">o</i><i class="w7">n</i></div><div class="c"><i></i></div></div>
<div class="r"><div class="n">41</div><div class="t"><i class="w7">L</i><i class="w7">e</i><i class="w6">c</i><i class="w3">i</i><i class="w3">t</i><i class="w7">h</i><i class="w3">i</i><i class="w7">n</i></div><div class="c"><i></i></div></div>
<div class="r"><div class="n">42</div><div class="t"><i class="w7">F</i><i class="w7">a</i><i class="w3">t</i><i class="w3">t</i><i class="w5">y</i><i class="w3"> </i><i class="w7">a</i><i class="w6">c</i><i class="w3">i</i><i class="w7">d</i></div><div class="c"><i></i></div></div>
<div class="r"><div class="n">43</div><div class="t"><i class="w8">E</i><i class="w3">l</i><i class="w7">e</i><i class="w11">m</i><i class="w7">e</i><i class="w7">n</i><i class="w3">t</i><i class="w3"> </i><i class="w7">o</i><i class="w3">f</i><i class="w3"> </i><i class="w8">H</i><i class="w7">u</i><i class="w11">m</i><i class="w7">a</i><i class="w7">n</i></div><div class="c"><i></i></div></div>
<div class="r"><div class="n">44</div><div class="t"><i class="w8">E</i><i class="w5">x</i><i class="w7">p</i><i class="w7">e</i><i class="w4">r</i><i class="w3">t</i><i class="w3"> </i><i class="w7">a</i><i class="w7">n</i><i class="w7">a</i><i class="w3">l</i><i class="w5">y</i><i class="w7">s</i><i class="w3">i</i><i class="w7">s</i></div><div class="c"><i></i></div></div>
<div class="r"><div class="n">45</div><div class="t"><i class="w8">H</i><i class="w7">a</i><i class="w7">n</i><i class="w7">d</i><i class="w3"> </i><i class="w7">a</i><i class="w7">n</i><i class="w7">a</i><i class="w3">l</i><i class="w5">y</i><i class="w7">s</i><i class="w3">i</i><i class="w7">s</i></div><div class="c"><i></i></div></div><div class="endline"></div></div><div class="sb"><div class="sbb up"><svg width="7" height="4" viewBox="0 0 7 4"><path d="M0 4 L3.5 0 L7 4Z" fill="#000"/></svg></div><div class="sbb th" style="top:409px"></div><div class="sbb dn"><svg width="7" height="4" viewBox="0 0 7 4"><path d="M0 0 L3.5 4 L7 0Z" fill="#000"/></svg></div></div></div>
  <div class="grid gc"><div class="gi"><div class="hr"><div class="n">No.</div><div class="t">Report Name</div><div class="c">Indicate</div></div>
<div class="r"><div class="n">1</div><div class="t"><i class="w7">T</i><i class="w4">r</i><i class="w7">a</i><i class="w6">c</i><i class="w7">e</i><i class="w3"> </i><i class="w8">E</i><i class="w3">l</i><i class="w7">e</i><i class="w11">m</i><i class="w7">e</i><i class="w7">n</i><i class="w3">t</i></div><div class="c"><i></i></div></div>
<div class="r"><div class="n">2</div><div class="t"><i class="w7">V</i><i class="w3">i</i><i class="w3">t</i><i class="w7">a</i><i class="w11">m</i><i class="w3">i</i><i class="w7">n</i></div><div class="c"><i></i></div></div>
<div class="r"><div class="n">3</div><div class="t"><i class="w7">A</i><i class="w11">m</i><i class="w3">i</i><i class="w7">n</i><i class="w7">o</i><i class="w3"> </i><i class="w7">A</i><i class="w6">c</i><i class="w3">i</i><i class="w7">d</i></div><div class="c"><i></i></div></div>
<div class="r"><div class="n">4</div><div class="t"><i class="w9">C</i><i class="w7">o</i><i class="w7">e</i><i class="w7">n</i><i class="w5">z</i><i class="w5">y</i><i class="w11">m</i><i class="w7">e</i></div><div class="c"><i></i></div></div>
<div class="r"><div class="n">5</div><div class="t"><i class="w8">E</i><i class="w7">s</i><i class="w7">s</i><i class="w7">e</i><i class="w7">n</i><i class="w3">t</i><i class="w3">i</i><i class="w7">a</i><i class="w3">l</i><i class="w3"> </i><i class="w7">F</i><i class="w7">a</i><i class="w3">t</i><i class="w3">t</i><i class="w5">y</i><i class="w3"> </i><i class="w7">A</i><i class="w6">c</i><i class="w3">i</i><i class="w7">d</i></div><div class="c"><i></i></div></div>
<div class="r"><div class="n">6</div><div class="t"><i class="w7">A</i><i class="w9">D</i><i class="w8">H</i><i class="w9">D</i></div><div class="c"><i></i></div></div>
<div class="r"><div class="n">7</div><div class="t"><i class="w7">A</i><i class="w7">d</i><i class="w7">o</i><i class="w3">l</i><i class="w7">e</i><i class="w7">s</i><i class="w6">c</i><i class="w7">e</i><i class="w7">n</i><i class="w3">t</i><i class="w3"> </i><i class="w3">I</i><i class="w7">n</i><i class="w3">t</i><i class="w7">e</i><i class="w3">l</i><i class="w3">l</i><i class="w3">i</i><i class="w7">g</i><i class="w7">e</i><i class="w7">n</i><i class="w6">c</i><i class="w7">e</i></div><div class="c"><i></i></div></div>
<div class="r"><div class="n">8</div><div class="t"><i class="w7">A</i><i class="w7">d</i><i class="w7">o</i><i class="w3">l</i><i class="w7">e</i><i class="w7">s</i><i class="w6">c</i><i class="w7">e</i><i class="w7">n</i><i class="w3">t</i><i class="w3"> </i><i class="w9">G</i><i class="w4">r</i><i class="w7">o</i><i class="w9">w</i><i class="w3">t</i><i class="w7">h</i><i class="w3"> </i><i class="w3">I</i><i class="w7">n</i><i class="w7">d</i><i class="w7">e</i><i class="w5">x</i></div><div class="c"><i></i></div></div>
<div class="r"><div class="n">9</div><div class="t"><i class="w7">L</i><i class="w7">e</i><i class="w6">c</i><i class="w3">i</i><i class="w3">t</i><i class="w7">h</i><i class="w3">i</i><i class="w7">n</i></div><div class="c"><i></i></div></div>
<div class="r"><div class="n">10</div><div class="t"><i class="w7">F</i><i class="w7">a</i><i class="w3">t</i><i class="w3">t</i><i class="w5">y</i><i class="w3"> </i><i class="w7">a</i><i class="w6">c</i><i class="w3">i</i><i class="w7">d</i></div><div class="c"><i></i></div></div><div class="endline"></div></div></div>
  <div class="wm">gzsanhe.en.alibaba.com</div>
  <div class="gb2"></div>
  <div class="btn def" style="left:248px"><span>Save(<u>S</u>)</span></div>
  <div class="btn" style="left:624px"><span style="letter-spacing:.87px;left:0px">Exit(<u>E</u>)</span></div>
 </div>
</div>
<div class="footer"><span>Copyright 2008-2025 Health Leader. All Rights Reserved.</span></div>
</body></html>
